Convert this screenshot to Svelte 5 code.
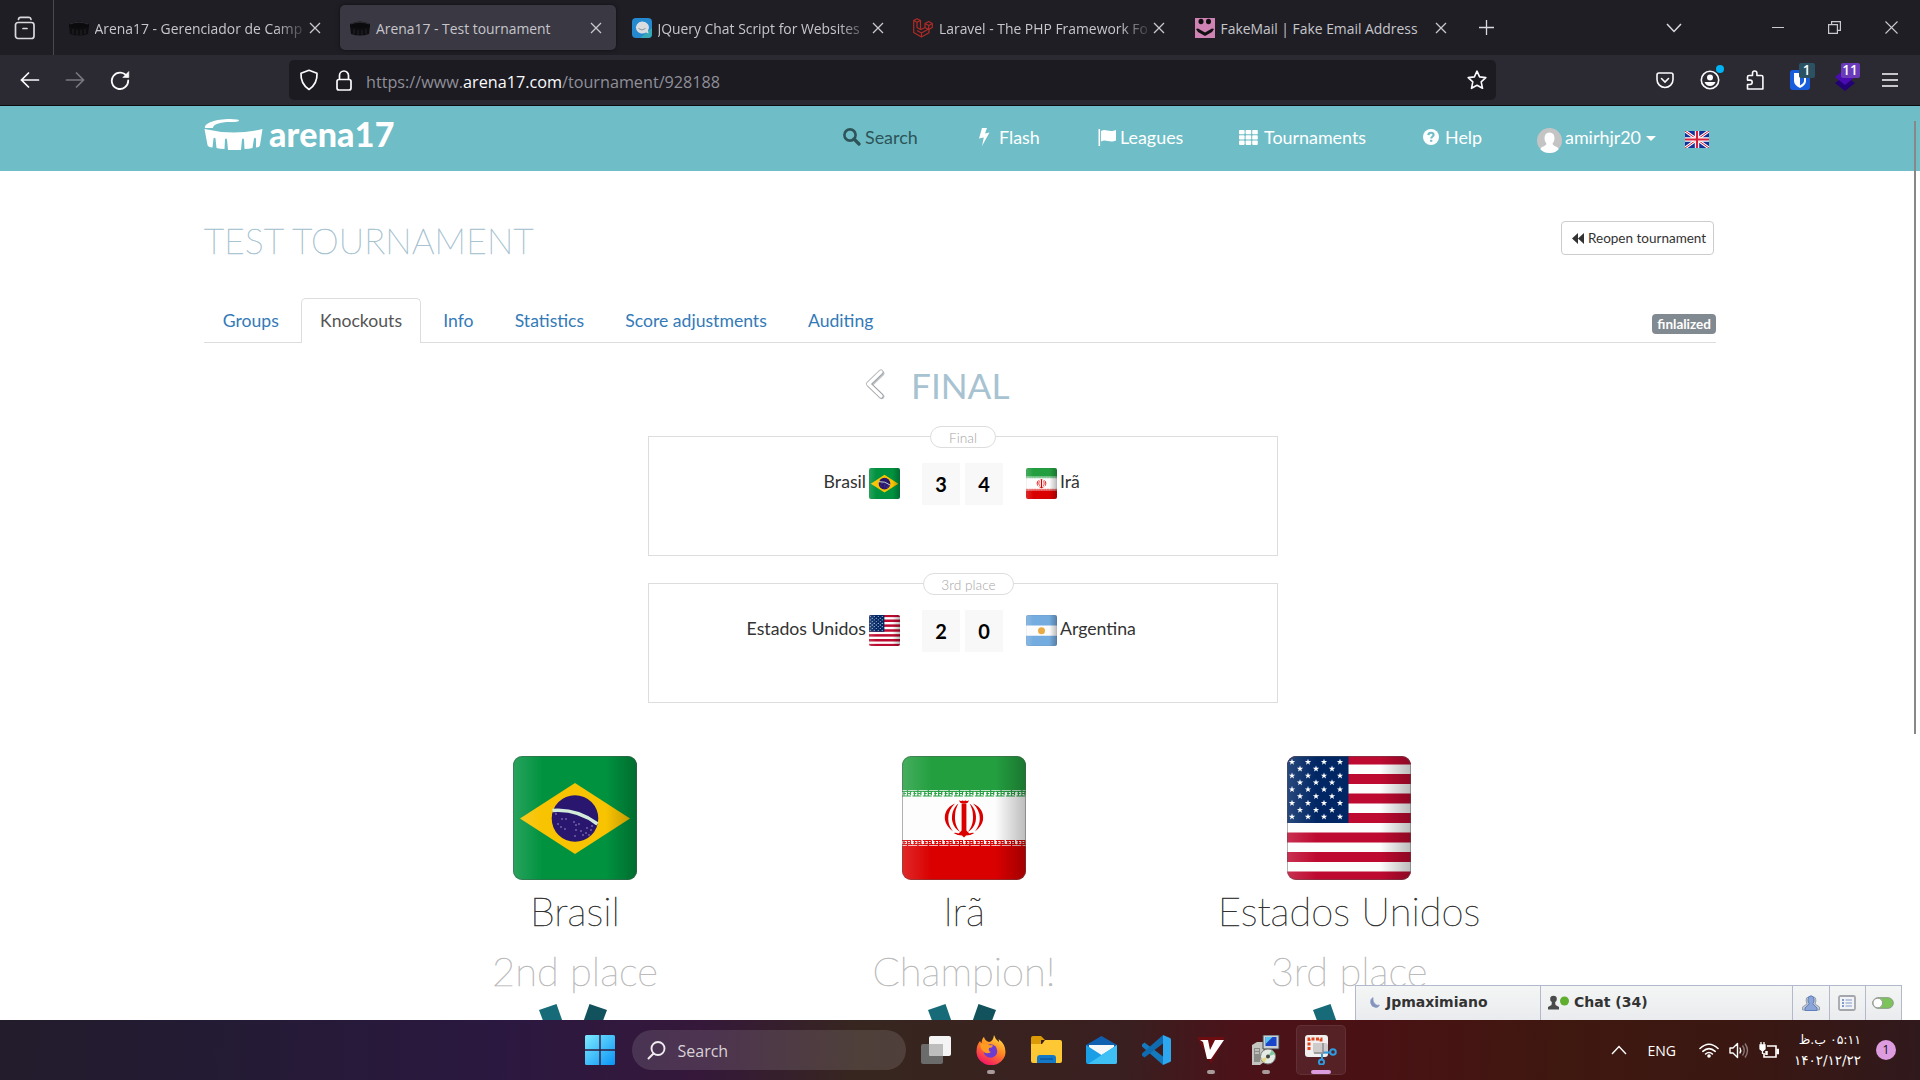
<script>
  const tabs = [
    { icon: 'arena', title: 'Arena17 - Gerenciador de Camp' },
    { icon: 'arena', title: 'Arena17 - Test tournament', active: true },
    { icon: 'chat', title: 'JQuery Chat Script for Websites' },
    { icon: 'laravel', title: 'Laravel - The PHP Framework Fo' },
    { icon: 'fake', title: 'FakeMail | Fake Email Address' },
  ];
  const nav = [
    { icon: 'search', label: 'Search', dark: true },
    { icon: 'flash', label: 'Flash' },
    { icon: 'flag', label: 'Leagues' },
    { icon: 'grid', label: 'Tournaments' },
    { icon: 'help', label: 'Help' },
  ];
  const sections = ['Groups', 'Knockouts', 'Info', 'Statistics', 'Score adjustments', 'Auditing'];
  const matches = [
    { label: 'Final', cls: 'final', home: 'Brasil', hf: 'br', a: 3, b: 4, away: 'Irã', af: 'ir' },
    { label: '3rd place', cls: 'third', home: 'Estados Unidos', hf: 'us', a: 2, b: 0, away: 'Argentina', af: 'ar' },
  ];
  const podium = [
    { flag: 'br', name: 'Brasil', place: '2nd place' },
    { flag: 'ir', name: 'Irã', place: 'Champion!' },
    { flag: 'us', name: 'Estados Unidos', place: '3rd place' },
  ];
  const stars = [];
  for (let r = 0; r < 9; r++) {
    const odd = r % 2;
    for (let c = 0; c < (odd ? 3 : 4); c++) stars.push([5 + (odd ? 8 : 0) + c * 16, 6 + r * 6.85]);
  }
  const stripes = [0, 1, 2, 3, 4, 5, 6].map((i) => -1.5 + i * 19.5);
  const script = Array.from({ length: 12 }, (_, i) => i * 10.4);
  const skyStars = [[49, 63], [45, 68], [48, 71], [52, 73], [53, 63], [61, 66], [63, 69], [66, 68], [63, 74], [68, 75], [73, 77], [74, 72], [76, 79], [70, 79], [78, 74], [62, 80], [43, 58], [79, 70]];
</script>

{#snippet flag(code)}
  <svg class="flag" viewBox="0 0 124 124">
    <defs>
      <clipPath id="round"><rect width="124" height="124" rx="9" /></clipPath>
      <linearGradient id="shine">
        <stop offset="0" stop-color="#fff" stop-opacity=".16" />
        <stop offset=".24" stop-color="#fff" stop-opacity="0" />
        <stop offset=".75" stop-color="#000" stop-opacity="0" />
        <stop offset="1" stop-color="#000" stop-opacity=".26" />
      </linearGradient>
    </defs>
    <g clip-path="url(#round)">
      {#if code === 'br'}
        <rect width="124" height="124" fill="#00923f" />
        <path d="M7 62.500L62 27l55 35.500L62 98z" fill="#f8c300" />
        <circle cx="62" cy="62.500" r="23.300" fill="#28166f" />
        <path d="M39.500 54.500Q64 52.500 84.500 68" fill="none" stroke="#d3ecd9" stroke-width="3.600" />
        {#each skyStars as [x, y]}<circle cx={x} cy={y} r=".7" fill="#b9b3dd" />{/each}
      {:else if code === 'ir'}
        <rect width="124" height="124" fill="#fdfdfd" />
        <rect width="124" height="34" fill="#239f40" />
        <rect y="90" width="124" height="34" fill="#da0000" />
        {#each script as x}
          <g fill="none" stroke-width="1.200">
            <path d="M{x} 35.300h10.400M{x} 40h9M{x + 1} 37.500h3M{x + 6} 37.500h3M{x + 2} 36v4M{x + 5.500} 34v6M{x + 8.500} 36v3" stroke="#239f40" />
            <path d="M{x} 88.700h10.400M{x} 84.500h9M{x + 1} 86.700h3M{x + 6} 86.700h3M{x + 2} 84v4M{x + 5.500} 84v6M{x + 8.500} 85v3" stroke="#da0000" />
          </g>
        {/each}
        <g fill="#da0000">
          <path d="M59.600 47.500h4.800v27l3 3q2-1 5-.6q-4 2.600-8.400 2.600L62 81.500L60 79.500q-4.400 0-8.400-2.600q3-.4 5 .6l3-3z" />
          <path d="M57.300 44q1 1.500 2.500.7q1.200-.8 2.200.5q1-1.300 2.200-.5q1.500.8 2.500-.7q.3 3.500-4.700 3.500T57.300 44z" />
          <path d="M56.500 47.500C50.500 52 49 60 50.500 66q1.500 6 7.500 10C53.500 70 53 65 53 61q0-8 3.500-13.500zM67.500 47.500C73.500 52 75 60 73.500 66q-1.500 6-7.500 10C70.500 70 71 65 71 61q0-8-3.500-13.500z" />
          <path d="M53 47.500C45 51 42 57 43 64q1 6 8 11.500C47 70 46 66 46.300 61q.3-7 6.700-13.500zM71 47.500C79 51 82 57 81 64q-1 6-8 11.500C77 70 78 66 77.700 61q-.3-7-6.700-13.500z" />
        </g>
      {:else if code === 'us'}
        <rect width="124" height="124" fill="#fdfdfd" />
        {#each stripes as y}<rect {y} width="124" height="10" fill="#be0a30" />{/each}
        <rect width="61.500" height="67" fill="#002664" />
        {#each stars as [x, y]}
          <path transform="translate({x} {y})" d="M0-3.300L.8-1H3.200L1.300.4L2 2.700L0 1.300L-2 2.700L-1.300.4L-3.200-1H-.8z" fill="#fff" />
        {/each}
      {:else}
        <rect width="124" height="124" fill="#fcfcfc" />
        <rect width="124" height="42" fill="#74acdf" />
        <rect y="83" width="124" height="41" fill="#74acdf" />
        <circle cx="62" cy="62.500" r="14" fill="#e8ab45" />
      {/if}
      <rect width="124" height="124" fill="url(#shine)" />
    </g>
    <rect x=".5" y=".5" width="123" height="123" rx="9" fill="none" stroke="#555" stroke-opacity=".45" />
  </svg>
{/snippet}

{#snippet favicon(name)}
  <svg class="fav" viewBox="0 0 20 20">
    {#if name === 'arena'}
      <path d="M0 6q10-5 20 0v3q-10 3-20 0z" fill="#0b0b0d" />
      <path d="M0 8q10 4 20 0l-1 8q-9 3-18 0z" fill="#0e0e10" />
      <path d="M4 11v5M8 12v5M12 12v5M16 11v5" stroke="#222126" />
      <path d="M1 6q9-3.500 18 0" stroke="#34343a" fill="none" stroke-width=".8" />
    {:else if name === 'chat'}
      <rect width="20" height="20" rx="4" fill="#2589cf" />
      <path d="M8 20L20 10v6q0 4-4 4z" fill="#35a9b5" />
      <path d="M10 3.500a6.500 6 0 1 0 4 11l2.500 1l-.5-3A6.500 6 0 0 0 10 3.500z" fill="#dadde0" />
      <path d="M6.500 10.500q3.500 3 7 0" fill="none" stroke="#8a959c" />
    {:else if name === 'laravel'}
      <g fill="none" stroke="#b02b25" stroke-width="1.200" stroke-linejoin="round">
        <path d="M.7 2.500L4 .8l3.500 1.700v9L4 9.500V4.300L.7 2.500v12L8.500 19l7.500-4.300v-4L8.500 15L4 12.500M4 4.300l3.500-1.800M8.500 15v4M12 5.500l3.700-2L19.300 5.500v4L15.700 11.500L12 9.500zM12 5.500l3.700 2l3.600-2M15.700 7.500v4M12 9.500l-4.500 2.300" />
      </g>
    {:else}
      <rect width="20" height="20" fill="#cf82b4" />
      <ellipse cx="6" cy="3.500" rx="2.500" ry="2.700" fill="#101010" />
      <ellipse cx="13.500" cy="3.500" rx="2.500" ry="2.700" fill="#101010" />
      <path d="M1 11l2-.5l7 4l7-4l2 .5l-2 3l-7 4l-7-4z" fill="#101010" />
    {/if}
  </svg>
{/snippet}

{#snippet navIcon(name)}
  {#if name === 'search'}
    <svg width="18" height="18" viewBox="0 0 18 18" fill="none" stroke="currentColor"><circle cx="7" cy="7" r="5.600" stroke-width="2.600" /><path d="M11 11l5 5" stroke-width="3.200" stroke-linecap="round" /></svg>
  {:else if name === 'flash'}
    <svg width="12" height="18" viewBox="0 0 12 18"><path d="M4 0h5L7 5.500l4.500-1L4 18l1.800-8.500L1 10.500z" fill="currentColor" /></svg>
  {:else if name === 'flag'}
    <svg width="18" height="17" viewBox="0 0 18 17" fill="currentColor"><path d="M.5 0h1.600v17H.5z" /><path d="M3 2c5-3 7 2 15-1v10.500c-7 3-10-2-15 1z" /></svg>
  {:else if name === 'grid'}
    <svg width="19" height="15" viewBox="0 0 19 15" fill="currentColor">
      {#each [0, 5.3, 10.6] as y}{#each [0, 6.6, 13.2] as x}<rect {x} {y} width="5.600" height="4.300" rx=".8" />{/each}{/each}
    </svg>
  {:else}
    <svg width="16" height="16" viewBox="0 0 16 16"><circle cx="8" cy="8" r="8" fill="#fff" /><path d="M5.300 6.200Q5.500 3.700 8 3.700t2.600 2.200C10.600 7.500 8.200 7.500 8.200 9.600" fill="none" stroke="#6fbdc6" stroke-width="2.100" /><path d="M7.100 10.800h2.200v2H7.100z" fill="#6fbdc6" /></svg>
  {/if}
{/snippet}

<div class="screen">
  <div class="tabbar">
    <div class="recent">
      <svg width="22" height="24" viewBox="0 0 22 24" fill="none" stroke="#d9d9de" stroke-width="1.700" stroke-linecap="round"><rect x="1.500" y="6.500" width="18.500" height="16" rx="2.500" /><path d="M4.500 3.300q.3-2 2-2h8.500q1.700 0 2 2M9 12.500h4" /></svg>
    </div>
    <div class="tabs">
      {#each tabs as t}
        <div class="tab" class:active={t.active}>
          {@render favicon(t.icon)}
          <span class="tab-title">{t.title}</span>
          <svg class="x" width="12" height="12" viewBox="0 0 12 12" stroke="#c9c9cf" stroke-width="1.300"><path d="M1 1l10 10M11 1L1 11" /></svg>
        </div>
      {/each}
    </div>
    <svg class="plus" width="15" height="15" viewBox="0 0 15 15" stroke="#d9d9de" stroke-width="1.300"><path d="M7.500 0v15M0 7.500h15" /></svg>
    <div class="win list"><svg width="16" height="10" viewBox="0 0 16 10" fill="none" stroke="#d9d9de" stroke-width="1.500"><path d="M1 1l7 7.500L15 1" /></svg></div>
    <div class="win"><svg width="12" height="12" viewBox="0 0 12 12"><path d="M0 5.500h12" stroke="#c9c9cf" /></svg></div>
    <div class="win"><svg width="13" height="13" viewBox="0 0 13 13" fill="none" stroke="#c9c9cf" stroke-width="1.200"><path d="M.6 3.600h8.800v8.800H.6zM3.600 3.600V.6h8.800v8.800H9.400" /></svg></div>
    <div class="win"><svg width="13" height="13" viewBox="0 0 13 13" stroke="#c9c9cf" stroke-width="1.100"><path d="M.5.500l12 12M12.500.500l-12 12" /></svg></div>
  </div>

  <div class="toolbar">
    <div class="tb"><svg width="20" height="16" viewBox="0 0 20 16" fill="none" stroke="#fbfbfe" stroke-width="1.700" stroke-linecap="round"><path d="M18.500 8H1.500M8.500 1l-7 7l7 7" /></svg></div>
    <div class="tb"><svg width="20" height="16" viewBox="0 0 20 16" fill="none" stroke="#78787f" stroke-width="1.700" stroke-linecap="round"><path d="M1.500 8H18.500M11.500 1l7 7l-7 7" /></svg></div>
    <div class="tb"><svg width="20" height="20" viewBox="0 0 20 20" fill="none" stroke="#fbfbfe" stroke-width="1.800"><path d="M17 6.500A8.200 8.200 0 1 0 18.200 10.500" stroke-linecap="round" /><path d="M18.800 1.500v6h-6z" fill="#fbfbfe" stroke-width=".6" /></svg></div>
    <div class="urlbar">
      <svg class="shield" width="20" height="22" viewBox="0 0 20 22" fill="none" stroke="#fbfbfe" stroke-width="1.700" stroke-linejoin="round"><path d="M10 1.300l8 3q.6 10.500-8 16.200Q1.400 14.800 2 4.300z" /></svg>
      <svg class="lock" width="16" height="21" viewBox="0 0 16 21" fill="none" stroke="#fbfbfe" stroke-width="1.700"><rect x="1" y="9.500" width="14" height="10.500" rx="2" /><path d="M3.500 9.500V5.500a4.500 4.500 0 0 1 9 0v4" /></svg>
      <span class="url">https://www.<b>arena17.com</b>/tournament/928188</span>
      <svg class="star" width="20" height="20" viewBox="0 0 20 20" fill="none" stroke="#fbfbfe" stroke-width="1.600" stroke-linejoin="round"><path d="M10 1.200l2.600 5.700l6.200.7l-4.600 4.200l1.300 6.500L10 15.200l-5.500 3.100l1.300-6.500L1.200 7.600l6.200-.7z" /></svg>
    </div>
    <div class="tb"><svg width="18" height="17" viewBox="0 0 18 17" fill="none" stroke="#fbfbfe" stroke-width="1.600" stroke-linecap="round"><path d="M3 1h12q2 0 2 2v4.500a8 8 0 0 1-16 0V3q0-2 2-2z" /><path d="M5.500 6.500L9 10l3.500-3.500" /></svg></div>
    <div class="tb">
      <svg width="20" height="20" viewBox="0 0 20 20"><circle cx="10" cy="10" r="8.700" fill="none" stroke="#fbfbfe" stroke-width="1.600" /><circle cx="10" cy="7.500" r="3" fill="#fbfbfe" /><path d="M4.500 12h11q-1.500 4-5.500 4t-5.500-4z" fill="#fbfbfe" /></svg>
      <i class="dot"></i>
    </div>
    <div class="tb"><svg width="18" height="20" viewBox="0 0 18 20" fill="none" stroke="#fbfbfe" stroke-width="1.600" stroke-linejoin="round"><path d="M6.500 5.500V3.200a2.200 2.200 0 0 1 4.400 0V5.500h4.500q1.500 0 1.500 1.500V19H1.500v-4.500H4a2.200 2.200 0 0 0 0-4.400H1.500V7q0-1.500 1.500-1.500z" /></svg></div>
    <div class="tb">
      <svg width="20" height="20" viewBox="0 0 20 20"><rect width="20" height="20" rx="3" fill="#175ddc" /><path d="M4 3h12v8q0 4-6 7q-6-3-6-7z" fill="#fff" /><path d="M10 5h4v6q0 2-4 4.500z" fill="#175ddc" /></svg>
      <span class="badge one">1</span>
    </div>
    <div class="tb">
      <svg width="22" height="22" viewBox="0 0 22 22"><path d="M11 7l10 7l-10 8L1 14z" fill="#230076" /><path d="M11 0l10 8l-10 8L1 8z" fill="#4a0bb0" /></svg>
      <span class="badge eleven">11</span>
    </div>
    <div class="tb"><svg width="16" height="14" viewBox="0 0 16 14" stroke="#fbfbfe" stroke-width="1.500"><path d="M0 1h16M0 7h16M0 13h16" /></svg></div>
  </div>

  <div class="page">
    <header>
      <svg class="bowl" width="59" height="31" viewBox="0 0 59 31" fill="#fff">
        <path d="M1 9C0 4 12 0 26 0q9 0 9 1.500t-9 1.500C16 3 9 5.500 9 9z" />
        <path d="M.5 10Q30 17 58.500 10L56 26q-.5 2.500-4 2.500L52 20q-.5-2-2-.500L48.500 29q-3 1-8 1L40 20.500q-1-2-2 0L37 31H24L23 20.500q-1-2-2 0L20.500 30q-5 0-8-1L11.500 19.500q-1.500-1.500-2 0L8.500 28.500Q4 28 3.500 26z" />
      </svg>
      <span class="brand">arena17</span>
      <nav>
        {#each nav as n}
          <a class="nav-item {n.icon}" class:dark={n.dark}>{@render navIcon(n.icon)}<span>{n.label}</span></a>
        {/each}
        <a class="nav-item user">
          <svg width="25" height="25" viewBox="0 0 25 25">
            <circle cx="12.500" cy="12.500" r="12.500" fill="#c4c4c4" />
            <path d="M12.500 4.500q5 0 5 6q0 3-2 5.200q0 1.500 4.500 3.300q1.500.8 1.500 2.500Q18 25 12.500 25T3.500 21.500q0-1.700 1.500-2.500q4.500-1.800 4.500-3.300q-2-2.200-2-5.200q0-6 5-6z" fill="#fff" />
          </svg>
          <span>amirhjr20</span><i class="caret"></i>
        </a>
        <svg class="uk" width="24" height="17" viewBox="0 0 24 17">
          <rect width="24" height="17" fill="#14309a" />
          <path d="M0 0l24 17M24 0L0 17" stroke="#fff" stroke-width="3" />
          <path d="M0 0l24 17M24 0L0 17" stroke="#d8203a" stroke-width="1" />
          <path d="M12 0v17M0 8.500h24" stroke="#fff" stroke-width="4.400" />
          <path d="M12 0v17M0 8.500h24" stroke="#d8203a" stroke-width="2.200" />
        </svg>
      </nav>
    </header>

    <main>
      <div class="title-row">
        <h1>TEST TOURNAMENT</h1>
        <button>
          <svg width="12" height="11" viewBox="0 0 12 11" fill="#333"><path d="M6 0v11L0 5.500zM12 0v11L6 5.500z" /></svg>
          <span>Reopen tournament</span>
        </button>
      </div>
      <div class="sections">
        {#each sections as s}<a class="section" class:current={s === 'Knockouts'}>{s}</a>{/each}
        <span class="status">finlalized</span>
      </div>
      <div class="round">
        <svg width="24" height="34" viewBox="0 0 24 34" fill="none" stroke-linecap="round" stroke-linejoin="round">
          <path d="M19 5.500L7 17l12 11.500" stroke="#7d8890" stroke-width="5" opacity=".5" />
          <path d="M18 4L5.500 16L18 28" stroke="#85898d" stroke-width="5.200" opacity=".6" />
          <path d="M18 4L5.500 16L18 28" stroke="#fff" stroke-width="3.400" />
        </svg>
        <h2>FINAL</h2>
      </div>
      {#each matches as m}
        <div class="match">
          <span class="pill {m.cls}">{m.label}</span>
          <div class="home"><span class="team">{m.home}</span>{@render flag(m.hf)}</div>
          <b class="score">{m.a}</b><b class="score">{m.b}</b>
          <div class="away">{@render flag(m.af)}<span class="team">{m.away}</span></div>
        </div>
      {/each}
      <div class="podium">
        {#each podium as p}
          <div class="spot">
            {@render flag(p.flag)}
            <div class="name">{p.name}</div>
            <div class="place">{p.place}</div>
            <svg width="72" height="30" viewBox="0 0 72 30"><path d="M0 6L17.500 0L28 30H9z" fill="#176a77" /><path d="M50.500 0L68 6L59 30H40z" fill="#11525d" /></svg>
          </div>
        {/each}
      </div>
    </main>
    <div class="scroll"></div>

    <div class="chat">
      <div class="cell friend">
        <svg width="10" height="11" viewBox="0 0 10 11"><path d="M3 .5Q0 2 .7 6T6 10.500Q8.500 10.500 9.500 8Q7 9 5 7Q2.500 4.500 3 .5z" fill="#8494bd" stroke="#8494bd" stroke-width=".6" /></svg>
        <b>Jpmaximiano</b>
      </div>
      <div class="cell room">
        <svg width="22" height="15" viewBox="0 0 22 15"><circle cx="5.500" cy="4" r="3.300" fill="#4a4a4a" /><path d="M4 6h3l.5 4l3.500 2v2.500H0V12l3.500-2z" fill="#4a4a4a" /><circle cx="16.500" cy="6" r="4.500" fill="#5fae2e" /></svg>
        <b>Chat (34)</b>
      </div>
      <div class="cell tool">
        <svg width="18" height="17" viewBox="0 0 18 17"><path d="M4.500 3q2-2 3.500 0l2 0q2-2 3.500 0q1 3-.5 6l4.500 3v3H.5v-3L5 9Q3.500 6 4.500 3z" fill="#c3c9d2" stroke="#97a0ad" /><path d="M9 .8q3 0 3 4q0 2.500-1.300 4L15 13v2.500H3V13l4.300-4.200Q6 7.300 6 4.800q0-4 3-4z" fill="#8ba5d8" stroke="#5f7fbd" /></svg>
      </div>
      <div class="cell tool">
        <svg width="18" height="16" viewBox="0 0 18 16"><rect x="1" y="1" width="16" height="14" rx="1.500" fill="#f1f3f6" stroke="#a3a6ab" stroke-width="1.800" /><path d="M4 5h2M4 8h2M4 11h2" stroke="#5f7fbd" stroke-width="1.500" /><path d="M7.500 5H14M7.500 8H14M7.500 11H14" stroke="#a9b9d8" stroke-width="1.500" /></svg>
      </div>
      <div class="cell tool">
        <svg width="22" height="12" viewBox="0 0 22 12"><rect x=".7" y=".7" width="20.600" height="10.600" rx="5.300" fill="#7cc35a" stroke="#8a9a85" /><circle cx="5.800" cy="6" r="4.800" fill="#fff" stroke="#999" /></svg>
      </div>
    </div>
  </div>

  <div class="taskbar">
    <svg class="win-logo" width="30" height="30" viewBox="0 0 30 30">
      <defs><linearGradient id="wl" x1="0" y1="0" x2="1" y2="1"><stop offset="0" stop-color="#7deaff" /><stop offset="1" stop-color="#0a93f5" /></linearGradient></defs>
      <path d="M1.500 0H14.300V14.300H0V1.500Q0 0 1.500 0zM15.700 0H28.500Q30 0 30 1.500V14.300H15.700zM0 15.700H14.300V30H1.500Q0 30 0 28.500zM15.700 15.700H30V28.500Q30 30 28.500 30H15.700z" fill="url(#wl)" />
    </svg>
    <div class="task-search">
      <svg width="19" height="19" viewBox="0 0 19 19" fill="none" stroke="#f0ecef" stroke-width="1.900" stroke-linecap="round"><circle cx="11" cy="7.500" r="6.500" /><path d="M6.500 12.500L1.500 17.500" /></svg>
      <span>Search</span>
    </div>
    <div class="app"><svg width="30" height="28" viewBox="0 0 30 28"><rect x="0" y="8" width="22" height="20" rx="2" fill="#6b6b6b" /><rect x="8" y="0" width="22" height="20" rx="2" fill="#f4f4f4" /><path d="M8 8h14v12H10q-2 0-2-2z" fill="#bdbdbd" /></svg></div>
    <div class="app">
      <svg width="30" height="30" viewBox="0 0 30 30">
        <defs><linearGradient id="fx" x1=".8" y1="0" x2=".3" y2="1"><stop offset="0" stop-color="#ffe14d" /><stop offset=".45" stop-color="#ff8a1f" /><stop offset="1" stop-color="#f4106a" /></linearGradient></defs>
        <path d="M18 0q1 4 5 7q0-2-.5-3q7 5 7 13A14.500 13.500 0 0 1 .5 16.500Q.5 10 4 6q.5 1.500 1.500 2Q6 3 8 2q1 4 5 5q4 0 5-7z" fill="url(#fx)" />
        <circle cx="14.500" cy="16" r="6.800" fill="#6e3bd0" />
        <path d="M4 9q6-2 9 1q4 0 4 1q-1 2-4 2q-1 3 2 4q-5 3-8-1q-3-3-3-7z" fill="#ff9a22" />
      </svg>
      <i class="run"></i>
    </div>
    <div class="app"><svg width="31" height="28" viewBox="0 0 31 28"><path d="M0 4V2q0-2 2-2h8l4 4h-4v5H0z" fill="#dd9a07" /><path d="M0 8h11l3-4h15q2 0 2 2v19q0 2-2 2H2q-2 0-2-2z" fill="#fdc834" /><path d="M6 27v-5q0-3 3-3h13q3 0 3 3v5z" fill="#1478c9" /><path d="M9 23h13" stroke="#0b57a0" stroke-width="1.500" /></svg></div>
    <div class="app"><svg width="31" height="28" viewBox="0 0 31 28"><path d="M0 9L15.500 0L31 9v5H0z" fill="#0f5fb0" /><path d="M3 9h25v10H3z" fill="#f5f6f8" /><path d="M0 9l15.500 10L31 9v17q0 2-2 2H2q-2 0-2-2z" fill="#1a9fe6" /><path d="M31 9v17q0 2-2 2H2z" fill="#3fc0f5" /></svg></div>
    <div class="app"><svg width="30" height="30" viewBox="0 0 30 30"><path d="M1 9.500L3.500 7.500L22 21.500V30L1 11.500z" fill="#1479bd" /><path d="M1 20.500L3.500 22.500L22 8.500V0L1 18.500z" fill="#0f6cb0" /><path d="M22 0l7 3q1 .5 1 1.500v21q0 1-1 1.500l-7 3z" fill="#2da7ef" /></svg></div>
    <div class="app"><svg width="28" height="27" viewBox="0 0 28 27"><path d="M0 0h28L14 27z" fill="#6d0c11" /><path d="M3 3h8l2 10l5-10h9L14 22h-4L6 5z" fill="#fff" /></svg><i class="run"></i></div>
    <div class="app">
      <svg width="28" height="30" viewBox="0 0 28 30"><path d="M0 10l5-3h7v20l-4 3H0z" fill="#c4c4c0" /><path d="M2 13h6v14H2z" fill="#8b8b88" /><path d="M3 15h4M3 18h4" stroke="#eee" /><path d="M11 0h16v14H11z" fill="#c9cfd4" stroke="#444" /><path d="M13.500 2h11v9h-11z" fill="#1b45c9" /><path d="M13.500 2h7l-7 7z" fill="#57c5ee" /><circle cx="16" cy="21.500" r="7.500" fill="#e4ebe5" stroke="#777" /><path d="M16 21.500L20 15l3 4z" fill="#7fc79c" /><path d="M16 21.500L12 28l-3-4z" fill="#e3d887" /><circle cx="16" cy="21.500" r="2" fill="#444" /></svg>
      <i class="run"></i>
    </div>
    <div class="app selected">
      <svg width="32" height="30" viewBox="0 0 32 30"><rect width="23" height="22" rx="3" fill="#f1efef" /><path d="M4 15V4h12v3" fill="none" stroke="#e0431b" stroke-width="3" stroke-dasharray="3 1.500" /><path d="M8 8h12q3 0 3 3v8H11q-3 0-3-3z" fill="#cfcbcb" /><g fill="none" stroke="#2d9be0" stroke-width="2"><circle cx="28" cy="17" r="2.800" /><circle cx="16.500" cy="27" r="2.600" /><path d="M25 17.500h-7M17 24.500v-6" /></g><path d="M18 8v10h-9" fill="none" stroke="#8d8d90" stroke-width="1.500" /></svg>
      <i class="run wide"></i>
    </div>
    <div class="tray">
      <svg class="up" width="16" height="10" viewBox="0 0 16 10" fill="none" stroke="#fff" stroke-width="1.400"><path d="M1 9l7-7.500L15 9" /></svg>
      <span class="eng">ENG</span>
      <svg class="wifi" width="20" height="15" viewBox="0 0 20 15" fill="none" stroke="#fff" stroke-width="1.600" stroke-linecap="round"><path d="M1 5.500q9-8.500 18 0M3.800 8.300q6.200-5.500 12.400 0M6.600 11q3.400-3 6.800 0" /><circle cx="10" cy="13" r="1" fill="#fff" /></svg>
      <svg class="vol" width="20" height="17" viewBox="0 0 20 17" fill="none" stroke="#fff" stroke-width="1.400" stroke-linejoin="round"><path d="M1 6h3l4.500-4.500v14L4 11H1z" /><path d="M11 6q1.500 2.500 0 5" stroke-linecap="round" /><path d="M13.500 3.500q3.500 5 0 10M16 1.500q5 7 0 14" stroke="#8b7774" /></svg>
      <svg class="bat" width="20" height="17" viewBox="0 0 20 17" fill="none" stroke="#fff" stroke-width="1.600"><path d="M8 4h9v11H5v-4" /><path d="M17.500 7.500h2v4h-2" fill="#fff" /><path d="M1 3h5v4L3.500 9L1 7zM2 0v3M5 0v3M3.500 8v4" fill="#fff" stroke-width="1.300" /><path d="M7.500 9v4" stroke-width="2.500" /></svg>
      <div class="clock"><span dir="rtl">۰۵:۱۱ ب.ظ</span><span class="date">۱۴۰۲/۱۲/۲۲</span></div>
      <span class="count">1</span>
    </div>
  </div>
</div>

<style>
  :global(body) { margin: 0; background: #fff; }
  .screen { width: 1920px; height: 1080px; display: flex; flex-direction: column; overflow: hidden; font-family: 'Lato', sans-serif; }
  svg { flex: none; display: block; }

  .tabbar { height: 55px; background: #1f1e25; display: flex; align-items: center; font-family: 'Open Sans', sans-serif; flex: none; }
  .recent { width: 54px; height: 55px; border-right: 1px solid #4a4950; display: flex; align-items: center; padding-left: 14px; box-sizing: border-box; }
  .tabs { display: flex; gap: 5.5px; margin-left: 4.5px; }
  .tab { width: 276px; height: 45px; box-sizing: border-box; border-radius: 5px; display: flex; align-items: center; padding: 0 14px 0 10px; color: #c6c6cb; font-size: 13.9px; }
  .tab.active { background: #393843; box-shadow: 0 0 4px #0008; }
  .fav { width: 20px; height: 20px; margin-right: 6px; }
  .tab-title { flex: 1; white-space: nowrap; padding-top: 2px; mask-image: linear-gradient(90deg, #000 86%, #0002); }
  .tab.active .tab-title, .tab:last-child .tab-title { mask-image: none; }
  .x { margin-left: 4px; }
  .plus { margin: 0 auto 0 18px; }
  .win { width: 57px; display: flex; justify-content: center; }
  .win.list { width: 50px; margin-right: 50px; }

  .toolbar { height: 50px; background: #2b2a32; border-bottom: 1px solid #0d0c10; display: flex; align-items: center; padding: 0 7.5px; flex: none; }
  .tb { width: 45px; display: flex; justify-content: center; position: relative; }
  .urlbar { margin: 0 146.5px; flex: 1; height: 40px; background: #1c1b22; border-radius: 5px; display: flex; align-items: center; box-sizing: border-box; padding: 0 9px 0 10px; }
  .lock { margin: 0 14px 0 17px; }
  .url { font: 16.2px 'Open Sans', sans-serif; color: #8f8f98; flex: 1; padding-top: 3px; }
  .url b { font-weight: 400; color: #fbfbfe; }
  .dot { position: absolute; right: 9px; top: -5px; width: 8px; height: 8px; border-radius: 50%; background: #00b3f4; }
  .badge { position: absolute; top: -7px; height: 15px; border-radius: 2px; color: #fff; font: 600 13.5px/14px 'Open Sans', sans-serif; text-align: center; }
  .one { left: 21px; width: 16px; background: #2a5263; }
  .eleven { left: 18px; top: -6px; width: 19px; background: #6a3ab8; }

  .page { height: 914px; position: relative; overflow: hidden; flex: none; background: #fff; }
  header { height: 65px; background: #6fbdc6; display: flex; align-items: flex-start; padding-left: 204px; color: #fff; }
  .bowl { margin: 13px 6px 0 0; width: 59px; }
  .brand { font: 900 34px/40px 'Lato', sans-serif; letter-spacing: .2px; width: 574px; margin-top: 8px; }
  nav { display: grid; grid-template-columns: 135px 120px 141px 184px 114px 148px auto; height: 65px; align-items: center; }
  .nav-item { display: flex; align-items: center; font-size: 17.9px; gap: 4px; height: 62px; color: #fff; padding-bottom: 3px; box-sizing: border-box; }
  .nav-item.dark { color: #2d5459; }
  .nav-item.flash { gap: 9px; }
  .nav-item.grid, .nav-item.help { gap: 6px; }
  .nav-item.user { gap: 3px; }
  .user svg { margin-top: 6px; }
  .caret { margin-left: 2px; margin-top: 3px; border: 5px solid transparent; border-top-color: #fff; border-bottom: 0; }
  .uk { margin-top: 1px; }

  main { padding: 0 204px; }
  .title-row { display: flex; justify-content: space-between; align-items: flex-start; height: 42px; margin-top: 49px; }
  h1, h2 { margin: 0; color: #a7c3d1; font-weight: 400; font-size: 35.2px; line-height: 42px; }
  h1 { font-weight: 200; letter-spacing: .25px; -webkit-text-stroke: .55px currentColor; margin-top: -1px; }
  button { height: 34px; width: 153px; margin: 1px 2px 0 0; border: 1px solid #ccc; border-radius: 4px; background: #fff; color: #333; font: 13.5px 'Lato', sans-serif; display: flex; align-items: center; gap: 4px; padding: 0 0 0 10px; white-space: nowrap; }
  .sections { display: flex; height: 45px; box-sizing: border-box; border-bottom: 1px solid #ddd; margin-top: 36px; gap: 3.6px; }
  .section { box-sizing: border-box; height: 45px; padding: 11px 17.8px 0; border: 1px solid transparent; border-bottom: 0; font-size: 17.6px; line-height: 22px; color: #337ab7; border-radius: 5px 5px 0 0; }
  .section.current { color: #555; background: #fff; border-color: #ddd; }
  .status { margin: 16px 0 0 auto; height: 20px; box-sizing: border-box; padding: 0 5px; background: #828a91; color: #fff; border-radius: 4px; font: 700 13.5px/20px 'Lato', sans-serif; }
  .round { display: flex; padding-left: 659px; margin-top: 21px; height: 42px; gap: 24px; }
  .round svg { margin-top: 4px; }
  .match { position: relative; display: flex; width: 630px; height: 120px; box-sizing: border-box; border: 1px solid #ddd; margin: 30px 0 27px 444px; padding-top: 26px; }
  .match + .match { margin-top: 0; }
  .pill { position: absolute; top: -11px; height: 22px; box-sizing: border-box; border: 1px solid #ddd; border-radius: 11px; background: #fff; font-size: 13.7px; font-weight: 300; line-height: 21px; color: #a5a5a5; text-align: center; }
  .pill.final { left: 281px; width: 66px; }
  .pill.third { left: 274px; width: 91px; }
  .home { width: 251px; display: flex; justify-content: flex-end; gap: 3px; margin-right: 22px; }
  .away { display: flex; gap: 3px; margin-left: 18px; }
  .match :global(.flag) { width: 31px; height: 31px; margin-top: 5px; }
  .team { font-size: 17.7px; line-height: 21px; color: #333; margin-top: 8px; }
  .score { width: 38px; height: 42px; line-height: 43px; margin-right: 5px; background: #f8f8f8; text-align: center; font-size: 20px; color: #000; }
  .podium { display: grid; grid-template-columns: 389px 389px 381px; margin: 53px 0 0 176.5px; }
  .spot { display: flex; flex-direction: column; align-items: center; font-size: 40px; line-height: 48px; font-weight: 200; -webkit-text-stroke: .55px currentColor; }
  .spot :global(.flag) { width: 124px; height: 124px; }
  .name { color: #333; margin: 7px 0 12px; }
  .place { color: #bbb; margin-bottom: 9px; }
  .scroll { position: absolute; right: 4px; top: 15px; width: 2px; height: 613px; background: #888; }

  .chat { position: absolute; right: 18.5px; bottom: 0; height: 35.5px; display: flex; border-top: 1.5px solid #b3b9cc; background: linear-gradient(#f4f6f5, #e9ebee); font: 14px 'DejaVu Sans', sans-serif; color: #333; box-sizing: border-box; }
  .cell { border-left: 1px solid #b3b9cc; box-sizing: border-box; display: flex; align-items: center; padding-bottom: 1px; }
  .chat .cell:last-child { border-right: 1px solid #b3b9cc; }
  .friend { width: 185px; padding-left: 14px; gap: 6px; }
  .room { width: 252px; padding-left: 7px; gap: 4px; }
  .tool { width: 36.5px; justify-content: center; padding-top: 2px; }

  .taskbar { height: 60px; flex: none; display: flex; align-items: center; background: linear-gradient(92deg, #231c2c 0, #231b33 200px, #2b1840 500px, #35183a 700px, #37261f 860px, #3a1f20 1130px, #4b1219 1240px, #4a1114 1370px, #3f1810 1560px, #3a1712 1750px, #30191c 1920px); color: #fff; font-family: 'Open Sans', sans-serif; }
  .win-logo { margin-left: 584.5px; }
  .task-search { width: 274px; height: 40px; border-radius: 20px; margin-left: 17px; background: #ffffff1f; box-sizing: border-box; padding: 1px 0 0 15px; display: flex; align-items: center; gap: 12px; font-size: 16px; color: #d9d2d6; margin-right: 3px; }
  .app { width: 55px; height: 60px; display: flex; align-items: center; justify-content: center; position: relative; }
  .run { position: absolute; bottom: 6px; left: 50%; width: 8px; height: 4px; margin-left: -4px; border-radius: 2px; background: #a99a9b; }
  .run.wide { width: 20px; margin-left: -10px; background: #dd9be0; bottom: 1px; }
  .selected { width: 50px; height: 50px; margin-left: 2px; background: #ffffff12; box-shadow: inset 0 0 0 1px #ffffff12; border-radius: 5px; }
  .tray { margin-left: auto; display: flex; align-items: center; padding-right: 24px; }
  .eng { font-size: 14px; margin: 0 23px 0 21px; }
  .vol { margin: 0 10px; }
  .bat { margin-right: 18px; }
  .clock { font: 12.5px/20px 'DejaVu Sans', sans-serif; display: flex; flex-direction: column; align-items: flex-end; margin-right: 15px; width: 64px; white-space: nowrap; }
  .date { font-size: 13.5px; letter-spacing: -.4px; }
  .count { width: 20px; height: 20px; border-radius: 50%; background: #dd9be0; color: #111; font-size: 12px; line-height: 20px; text-align: center; }
</style>
